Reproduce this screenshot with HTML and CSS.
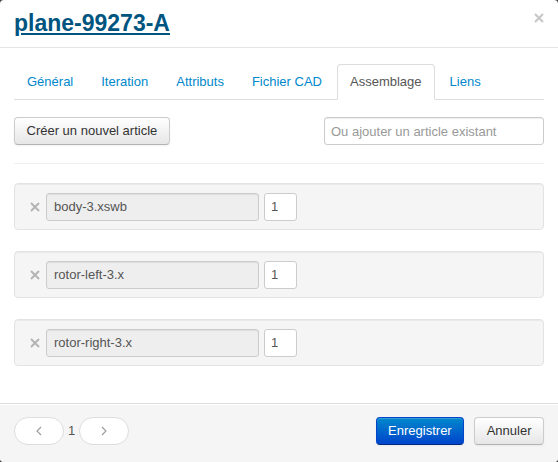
FILE: index.html
```html
<!DOCTYPE html>
<html lang="fr">
<head>
<meta charset="utf-8">
<title>plane-99273-A</title>
<link rel="stylesheet" href="styles.css">
</head>
<body>
<div class="modal">
  <div class="modal-header">
    <h3 class="title"><a href="#">plane-99273-A</a></h3>
    <button class="close" aria-label="Fermer">
      <svg width="10" height="10" viewBox="0 0 10 10"><path d="M1 1L9 9M9 1L1 9" stroke="#c8c8c8" stroke-width="2.2"/></svg>
    </button>
  </div>
  <div class="modal-body">
    <ul class="nav-tabs">
      <li><a href="#">Général</a></li>
      <li><a href="#">Iteration</a></li>
      <li><a href="#">Attributs</a></li>
      <li><a href="#">Fichier CAD</a></li>
      <li class="active"><a href="#">Assemblage</a></li>
      <li><a href="#">Liens</a></li>
    </ul>
    <div class="toolbar">
      <button class="btn">Créer un nouvel article</button>
      <input class="search" type="text" placeholder="Ou ajouter un article existant">
    </div>
    <hr class="sep">
    <div class="components">
      <div class="well">
        <span class="remove"><svg width="10" height="10" viewBox="0 0 10 10"><path d="M1 1L9 9M9 1L1 9" stroke="#b4b4b4" stroke-width="2"/></svg></span>
        <input class="name" type="text" value="body-3.xswb" disabled>
        <input class="qty" type="text" value="1">
      </div>
      <div class="well">
        <span class="remove"><svg width="10" height="10" viewBox="0 0 10 10"><path d="M1 1L9 9M9 1L1 9" stroke="#b4b4b4" stroke-width="2"/></svg></span>
        <input class="name" type="text" value="rotor-left-3.x" disabled>
        <input class="qty" type="text" value="1">
      </div>
      <div class="well">
        <span class="remove"><svg width="10" height="10" viewBox="0 0 10 10"><path d="M1 1L9 9M9 1L1 9" stroke="#b4b4b4" stroke-width="2"/></svg></span>
        <input class="name" type="text" value="rotor-right-3.x" disabled>
        <input class="qty" type="text" value="1">
      </div>
    </div>
  </div>
  <div class="modal-footer">
    <div class="pager">
      <button class="pill"><svg width="6" height="10" viewBox="0 0 6 10"><path d="M5 1L1 5L5 9" fill="none" stroke="#9a9a9a" stroke-width="1.1"/></svg></button>
      <span class="page">1</span>
      <button class="pill"><svg width="6" height="10" viewBox="0 0 6 10"><path d="M1 1L5 5L1 9" fill="none" stroke="#9a9a9a" stroke-width="1.1"/></svg></button>
    </div>
    <div class="actions">
      <button class="btn btn-primary">Enregistrer</button>
      <button class="btn">Annuler</button>
    </div>
  </div>
</div>
</body>
</html>
```
FILE: styles.css
```css
* { box-sizing: border-box; }
html, body { margin: 0; padding: 0; }
body {
  background: #444;
  font-family: "Liberation Sans", Arial, sans-serif;
  font-size: 13px;
  line-height: 18px;
  color: #333;
}
.modal {
  width: 558px;
  height: 462px;
  background: #fff;
  border-radius: 4px;
  overflow: hidden;
  display: flex;
  flex-direction: column;
}
.modal-header {
  display: flex;
  justify-content: space-between;
  align-items: flex-start;
  padding: 10px 14px 10px 14px;
  border-bottom: 1px solid #e5e5e5;
}
.title {
  margin: 0;
  font-size: 23px;
  line-height: 27px;
  font-weight: bold;
}
.title a { color: #005580; text-decoration: underline; }
.close {
  border: 0;
  background: none;
  padding: 0;
  margin-top: 3px;
  width: 10px;
  height: 10px;
  display: flex;
}
.modal-body {
  flex: 1;
  padding: 16px 14px 0;
}
.nav-tabs {
  list-style: none;
  margin: 0 0 17px;
  padding: 0;
  display: flex;
  border-bottom: 1px solid #ddd;
}
.nav-tabs li { margin-bottom: -1px; margin-right: 2px; }
.nav-tabs a {
  display: block;
  padding: 8px 12px;
  line-height: 18px;
  border: 1px solid transparent;
  border-radius: 4px 4px 0 0;
  color: #0088cc;
  text-decoration: none;
}
.nav-tabs .active a {
  color: #555;
  background: #fff;
  border-color: #ddd #ddd transparent;
}
.toolbar {
  display: flex;
  justify-content: space-between;
  align-items: center;
}
.btn {
  font-family: inherit;
  font-size: 13px;
  line-height: 18px;
  padding: 4px 11.5px;
  color: #333;
  background: linear-gradient(#ffffff, #e6e6e6);
  border: 1px solid #ccc;
  border-bottom-color: #b3b3b3;
  border-radius: 4px;
  box-shadow: inset 0 1px 0 rgba(255,255,255,.2), 0 1px 2px rgba(0,0,0,.05);
  height: 28px;
}
.btn-primary {
  color: #fff;
  background: linear-gradient(#0088cc, #0044cc);
  border-color: #0044cc #0044cc #002a80;
}
.search {
  width: 220px;
  height: 28px;
  padding: 4px 6px;
  font-family: inherit;
  font-size: 13px;
  color: #555;
  border: 1px solid #ccc;
  border-radius: 3px;
  box-shadow: inset 0 1px 1px rgba(0,0,0,.075);
}
.search::placeholder { color: #999; }
.sep {
  border: 0;
  border-top: 1px solid #eee;
  margin: 18px 0 19px;
}
.components { display: flex; flex-direction: column; gap: 21px; }
.well {
  display: flex;
  align-items: center;
  height: 47px;
  padding: 0 14px;
  background: #f5f5f5;
  border: 1px solid #e3e3e3;
  border-radius: 4px;
  box-shadow: inset 0 1px 1px rgba(0,0,0,.05);
}
.remove { display: flex; width: 10px; height: 10px; margin-left: 1px; margin-right: 6px; }
.name, .qty {
  height: 28px;
  font-family: inherit;
  font-size: 13px;
  color: #555;
  border: 1px solid #ccc;
  border-radius: 3px;
  padding: 4px 6px;
}
.name {
  width: 213px;
  padding-left: 7px;
  background: #eee;
  box-shadow: inset 0 1px 1px rgba(0,0,0,.075);
}
.qty {
  width: 33px;
  margin-left: 5px;
  background: #fff;
}
.modal-footer {
  display: flex;
  justify-content: space-between;
  align-items: flex-start;
  height: 59px;
  padding: 13px 14px 0;
  background: #f5f5f5;
  border-top: 1px solid #ddd;
  box-shadow: inset 0 1px 0 #fff;
}
.pager { display: flex; align-items: center; }
.pill {
  width: 50px;
  height: 28px;
  border: 1px solid #ddd;
  border-radius: 15px;
  background: #fff;
  display: flex;
  align-items: center;
  justify-content: center;
  padding: 0;
}
.page { margin: 0 4px; color: #555; }
.actions { display: flex; gap: 10px; }
```
